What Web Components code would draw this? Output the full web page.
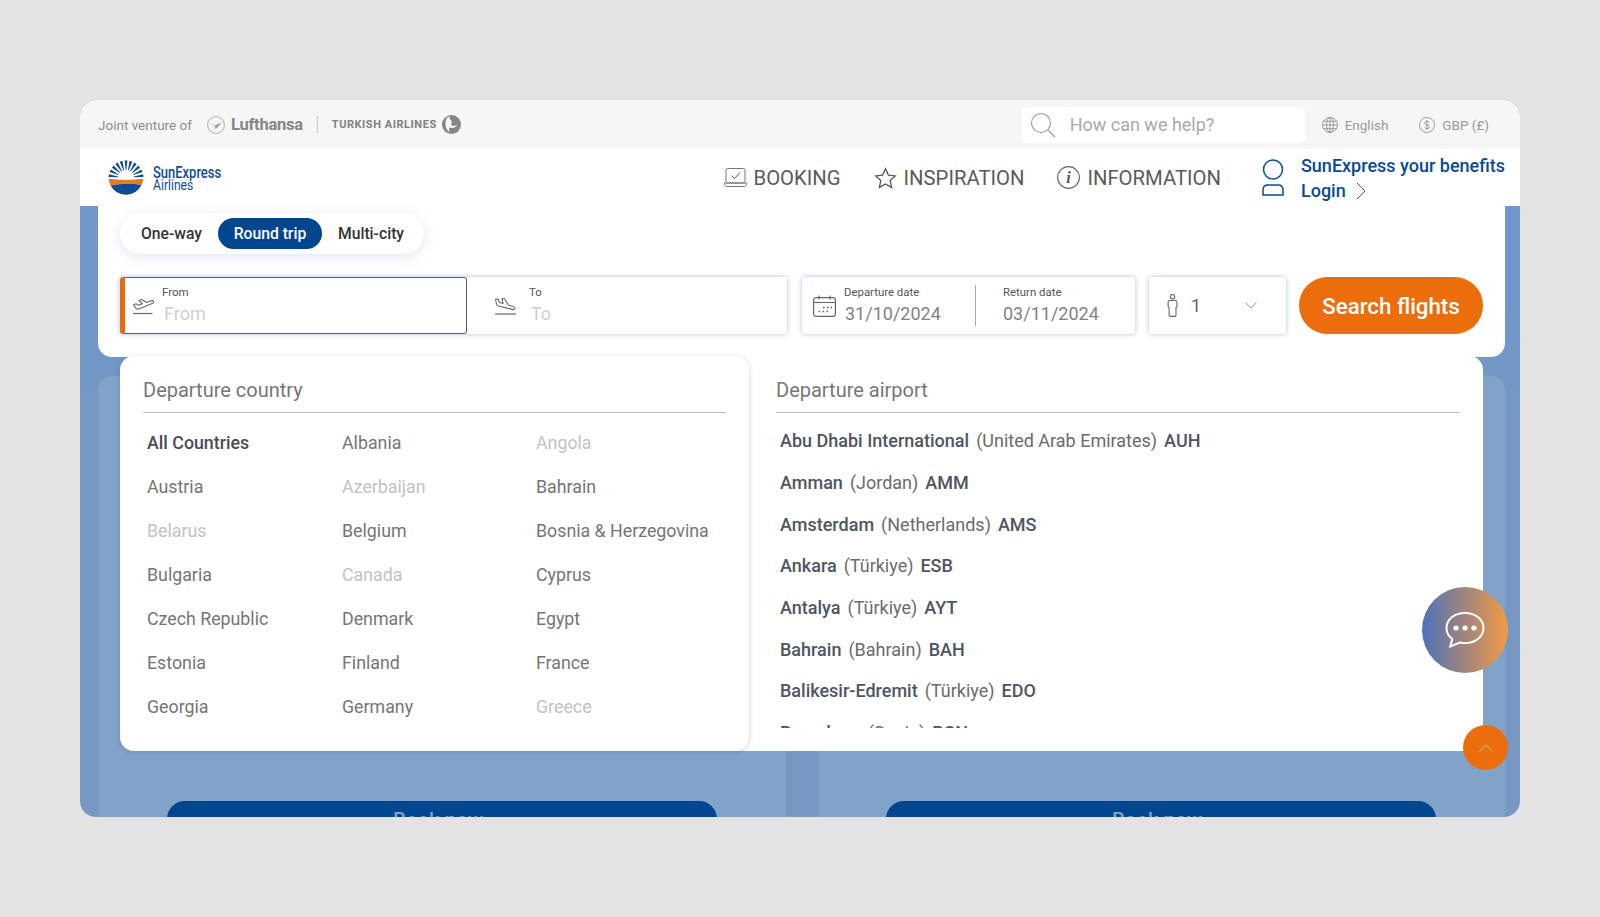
<!DOCTYPE html>
<html lang="en">
<head>
<meta charset="utf-8">
<title>SunExpress</title>
<style>
  html, body { margin: 0; height: 100%; }
  body { background: #e3e3e3; font-family: Roboto, "Liberation Sans", sans-serif; overflow: hidden; }
</style>
</head>
<body>
<se-app>
  <se-topbar slot="top"></se-topbar>
  <se-header slot="top"></se-header>
  <se-search-panel></se-search-panel>
  <se-promo-row></se-promo-row>
  <se-dropdown></se-dropdown>
</se-app>

<script>
const svgIcons = {
    takeoff: `<svg width="22" height="18" viewBox="0 0 22 18" fill="none" stroke="#666" stroke-width="1.100" stroke-linejoin="round"><path d="M1.500 8L4 6.800l2.500 1.400 4-1.400L7 3.500l2.500-.9L15 5.400 18.500 4c2-.8 3.300-.2 3.200.8-.1.800-.9 1.500-2.200 2L6.500 12c-1 .4-1.900.1-2.500-.7z"/><path d="M1 16.500h19.500" stroke-width="1.200"/></svg>`,
    landing: `<svg width="23" height="18" viewBox="0 0 23 18" fill="none" stroke="#666" stroke-width="1.100" stroke-linejoin="round"><path d="M1.500 2.500L4 2l1.500 3.500L9 6.500 8 1.500l2.500.3L14.500 8l4 1.200c1.700.6 2.800 1.500 2.500 2.500-.3 1-1.700 1.100-3 .7L4.500 9C3.300 8.600 2.700 8 2.500 7z"/><path d="M1 17h21" stroke-width="1.200"/></svg>`,
    calendar: `<svg width="23" height="22" viewBox="0 0 23 22" fill="none" stroke="#666" stroke-width="1.200"><rect x=".6" y="2.600" width="21.800" height="18.800" rx="2.500"/><path d="M.6 7.500h21.800M6 .5v4M17 .5v4"/><path d="M10 12.500h1.600M14 12.500h1.600M17.500 12.500h1.600M5.500 16.500h1.600M9.500 16.500h1.600M13.500 16.500h1.600" stroke-width="1.600"/></svg>`,
    person: `<svg width="11" height="23" viewBox="0 0 11 23" fill="none" stroke="#666" stroke-width="1.100"><circle cx="5.500" cy="2.700" r="2.200"/><path d="M2.800 6.500h5.400c1 0 1.800.8 1.800 1.800v4.200l-1 1v7.500c0 .8-.6 1.400-1.400 1.400H3.500c-.8 0-1.400-.6-1.400-1.400v-7.500l-1-1V8.300c0-1 .8-1.800 1.700-1.800z"/></svg>`,
    chevronDown: `<svg width="12" height="7" viewBox="0 0 12 7" fill="none" stroke="#999" stroke-width="1"><path d="M.5.500l5.500 5.500L11.500.500"/></svg>`,
};

class SeApp extends HTMLElement {
    constructor() {
        super();
        this.attachShadow({ mode: 'open' }).innerHTML = `
      <style>
        :host { display: block; padding: 100px 80px; box-sizing: border-box; height: 917px; }
        .frame { position: relative; height: 717px; border-radius: 16px; overflow: hidden; background: linear-gradient(#6f97c9 30%, #7698c2 45%); display: flex; flex-direction: column; }
        .stage { position: relative; flex: 1; display: flex; flex-direction: column; min-height: 0; }
        .fab { position: absolute; border-radius: 50%; display: flex; align-items: center; justify-content: center; }
        .chat { left: 1342px; top: 487px; width: 86px; height: 86px; background: linear-gradient(90deg, #4e72b8, #f39a42); }
        .up { left: 1383px; top: 625px; width: 45px; height: 45px; background: #ec6d0b; }
      </style>
      <div class="frame">
        <slot name="top"></slot>
        <div class="stage"><slot></slot></div>
        <div class="fab chat">
          <svg width="40" height="38" viewBox="0 0 40 38" fill="none" stroke="#fff" stroke-width="2"><path d="M20 2C9.500 2 1.500 8.500 1.500 17c0 4.500 2.200 8.300 5.800 11l-2 7.500 9.500-4c1.700.4 3.400.6 5.200.6 10.500 0 18.500-6.600 18.500-15.100S30.500 2 20 2z"/><g fill="#fff" stroke="none"><circle cx="11" cy="17" r="2.600"/><circle cx="20" cy="17" r="2.600"/><circle cx="29" cy="17" r="2.600"/></g></svg>
        </div>
        <div class="fab up">
          <svg width="14" height="8" viewBox="0 0 14 8" fill="none" stroke="#f7c49b" stroke-width="1"><path d="M.5 7.500L7 1l6.500 6.500"/></svg>
        </div>
      </div>
    `;
    }
}

class SeTopbar extends HTMLElement {
    constructor() {
        super();
        this.attachShadow({ mode: 'open' }).innerHTML = `
      <style>
        :host { display: flex; align-items: center; height: 49px; background: #f6f6f6; padding: 0 31px 0 18px; color: #8d8d8d; font-size: 13.500px; }
        .lh { display: flex; margin-left: 15px; }
        .lh-name { margin-left: 6px; font-size: 16.500px; font-weight: 700; color: #868686; letter-spacing: -.25px; }
        .sep { width: 1px; height: 17px; background: #c9c9c9; margin: 0 14px; }
        .thy { font-size: 11px; font-weight: 700; letter-spacing: .55px; color: #808080; }
        .thy-mark { display: flex; margin-left: 5px; }
        .search { margin-left: auto; width: 283px; height: 36px; background: #fff; border-radius: 6px; display: flex; align-items: center; box-sizing: border-box; padding-left: 8px; }
        .search span { margin-left: 14px; font-size: 18px; color: #a9a9a9; }
        .opt { display: flex; align-items: center; gap: 7px; color: #999; }
        .lang { margin-left: 17px; }
        .cur { margin-left: 31px; }
      </style>
      <span>Joint venture of</span>
      <span class="lh">
        <svg width="18" height="18" viewBox="0 0 18 18" fill="none" stroke="#9a9a9a" stroke-width=".8"><circle cx="9" cy="9" r="8.400"/><path d="M3 7.500c2 .2 3.500 1.200 5 2.500 .8-1.200 3-2.500 7-3-2 1.500-3.500 3-5 4.700L8.500 13 7.800 10.600C6.500 9.200 5 8.200 3 7.500z" fill="#9a9a9a" stroke="none"/></svg>
      </span>
      <span class="lh-name">Lufthansa</span>
      <span class="sep"></span>
      <span class="thy">TURKISH AIRLINES</span>
      <span class="thy-mark">
        <svg width="19" height="19" viewBox="0 0 19 19"><circle cx="9.500" cy="9.500" r="9.500" fill="#858585"/><path d="M5 2.500C3.500 5 3 9 4 12.500c.8 2 2 3.500 3.500 4.500-.7-2-.5-3.500.3-4.500 2.500 1 5.500.2 7.700-2.500-2 .8-4.500 1-6.500.2 1.200-2 .8-5.500-1.500-6.200L8 1.500z" fill="#f6f6f6"/></svg>
      </span>
      <div class="search">
        <svg width="26" height="26" viewBox="0 0 26 26" fill="none" stroke="#9a9a9a" stroke-width="1.100"><circle cx="11" cy="11" r="9.500"/><path d="M18 18l7 7"/></svg>
        <span>How can we help?</span>
      </div>
      <div class="opt lang">
        <svg width="16" height="16" viewBox="0 0 16 16" fill="none" stroke="#888" stroke-width=".8"><circle cx="8" cy="8" r="7.500"/><ellipse cx="8" cy="8" rx="3.500" ry="7.500"/><path d="M8 .5v15M.5 8h15M1.500 4.300h13M1.500 11.700h13"/></svg>
        English
      </div>
      <div class="opt cur">
        <svg width="16" height="16" viewBox="0 0 16 16" fill="none" stroke="#888" stroke-width=".8"><circle cx="8" cy="8" r="7.500"/><path d="M10.300 5.700C9.900 4.800 9 4.300 8 4.300c-1.300 0-2.300.7-2.300 1.800 0 2.400 4.700 1.300 4.700 3.800 0 1.100-1 1.800-2.400 1.800-1.100 0-2-.5-2.400-1.400M8 3v10"/></svg>
        GBP (£)
      </div>
    `;
    }
}

class SeHeader extends HTMLElement {
    constructor() {
        super();
        let rays = '';
        for (let i = 0; i < 11; i++) {
            const a = (-172 + i * 16.4) * Math.PI / 180;
            const w = 0.08;
            const p = (r, d) => `${(18 + r * Math.cos(a + d)).toFixed(2)},${(18 + r * Math.sin(a + d)).toFixed(2)}`;
            rays += `<polygon points="${p(8, -0.04)} ${p(8, 0.04)} ${p(17.500, w)} ${p(17.500, -w)}"/>`;
        }
        this.attachShadow({ mode: 'open' }).innerHTML = `
      <style>
        :host { display: flex; align-items: center; height: 57px; background: #fff; padding: 0 15px 0 28px; box-sizing: border-box; }
        .logo { display: flex; align-items: center; }
        .brand { margin: 2px 0 0 9px; color: #0f4b92; font-size: 16px; line-height: 13px; font-weight: 500; width: 68px; }
        .brand div { height: 13px; transform: scaleX(.81); transform-origin: left; white-space: nowrap; }
        .brand .sub { font-weight: 400; font-size: 15px; }
        nav { margin-left: auto; display: flex; align-items: center; gap: 33px; }
        .item { display: flex; align-items: center; gap: 7px; font-size: 20.300px; color: #5a5a5a; }
        .user { display: flex; align-items: center; margin-left: 41px; color: #0a4a94; }
        .user-text { margin: 1px 0 0 17px; font-size: 18px; font-weight: 500; line-height: 24px; }
        .login { display: flex; align-items: center; gap: 10px; margin-top: 1px; }
      </style>
      <div class="logo">
        <svg width="36" height="36" viewBox="0 0 36 36">
          <g fill="#0f4b92">${rays}</g>
          <path d="M.8 18.800Q18 21 35.200 18.800Q35 22 33.500 25Q18 22.500 2.500 25.500Q1 22 .8 18.800z" fill="#ea7a1f"/>
          <path d="M2.500 25.500Q18 22.500 33.500 25A17.500 17.500 0 0 1 2.500 25.500z" fill="#0f4b92"/>
        </svg>
        <div class="brand"><div>SunExpress</div><div class="sub">Airlines</div></div>
      </div>
      <nav>
        <div class="item">
          <svg width="23" height="19" viewBox="0 0 23 19" fill="none" stroke="#777" stroke-width="1"><rect x="2" y=".5" width="19" height="14.500" rx="1.500"/><path d="M.5 15h22v1.500c0 1-.8 2-2 2h-18c-1.200 0-2-1-2-2z"/><path d="M7.500 7.500l3 3 5.500-6" stroke="#555"/></svg>
          BOOKING
        </div>
        <div class="item">
          <svg width="23" height="22" viewBox="0 0 23 22" fill="none" stroke="#555" stroke-width="1.300"><path d="M11.500 1.800l2.900 6.300 6.900.8-5.100 4.700 1.400 6.800-6.100-3.400-6.100 3.400 1.400-6.800L1.700 8.900l6.900-.8z"/></svg>
          INSPIRATION
        </div>
        <div class="item">
          <svg width="23" height="23" viewBox="0 0 23 23" fill="none" stroke="#666" stroke-width="1.100"><circle cx="11.500" cy="11.500" r="10.900"/><text x="11.500" y="17" text-anchor="middle" font-family="Liberation Serif, serif" font-style="italic" font-weight="700" font-size="16" fill="#555" stroke="none">i</text></svg>
          INFORMATION
        </div>
      </nav>
      <div class="user">
        <svg width="22" height="37" viewBox="0 0 22 37" fill="none" stroke="#0a4a94" stroke-width="1.500"><circle cx="11" cy="10.500" r="9.500"/><path d="M6 26h10c3 0 5 2 5 5v5H1v-5c0-3 2-5 5-5z"/></svg>
        <div class="user-text">
          <div>SunExpress your benefits</div>
          <div class="login">Login <svg width="10" height="18" viewBox="0 0 10 18" fill="none" stroke="#555" stroke-width="1"><path d="M1 1l8 8-8 8"/></svg></div>
        </div>
      </div>
    `;
    }
}

class SeTripTabs extends HTMLElement {
    constructor() {
        super();
        this.attachShadow({ mode: 'open' }).innerHTML = `
      <style>
        :host { display: inline-flex; align-items: center; height: 41px; width: 304px; box-sizing: border-box; background: #fff; border-radius: 21px; box-shadow: 0 3px 14px rgba(110,140,180,.22); padding-left: 21px; font-size: 15.700px; font-weight: 500; color: #333; }
        .on { background: #02468f; color: #fff; height: 31px; line-height: 31px; width: 104px; text-align: center; border-radius: 16px; margin: 0 16px 0 16px; }
      </style>
      <span>One-way</span><span class="on">Round trip</span><span>Multi-city</span>
    `;
    }
}

class SeRouteField extends HTMLElement {
    constructor() {
        super();
        this.attachShadow({ mode: 'open' });
    }
    connectedCallback() {
        const label = this.getAttribute('label');
        this.shadowRoot.innerHTML = `
      <style>
        :host { display: flex; align-items: center; box-sizing: border-box; height: 57px; background: #fff; }
        :host([active]) { border: 1px solid #59636f; border-left: 5px solid #e96c0c; border-radius: 3px; width: 347px; padding-left: 7px; }
        :host([plain]) { flex: 1; padding-left: 27px; border-radius: 0 3px 3px 0; }
        .gap { margin-left: 8px; }
        :host([plain]) .gap { margin-left: 12px; }
        .label { font-size: 11.500px; line-height: 14px; color: #555; }
        .value { font-size: 18px; line-height: 24px; margin: 3px 0 0 2px; color: #cfcfcf; }
      </style>
      ${svgIcons[this.getAttribute('icon')]}
      <div class="gap"><div class="label">${label}</div><div class="value">${label}</div></div>
    `;
    }
}

class SeDateField extends HTMLElement {
    constructor() {
        super();
        this.attachShadow({ mode: 'open' }).innerHTML = `
      <style>
        :host { display: flex; align-items: center; box-sizing: border-box; width: 333px; height: 57px; background: #fff; border-radius: 3px; box-shadow: 0 0 5px rgba(90,130,185,.5); padding-left: 11px; }
        .col { margin-left: 8px; width: 131px; }
        .col.ret { margin-left: 0; padding-left: 27px; border-left: 1px solid #a8a8a8; width: auto; height: 41px; }
        .label { font-size: 11.400px; line-height: 14px; color: #555; }
        .value { font-size: 18px; line-height: 24px; margin: 3px 0 0 1px; color: #828282; }
        .ret .value { margin-left: 0; }
      </style>
      ${svgIcons.calendar}
      <div class="col"><div class="label">Departure date</div><div class="value">31/10/2024</div></div>
      <div class="col ret"><div class="label">Return date</div><div class="value">03/11/2024</div></div>
    `;
    }
}

class SePaxField extends HTMLElement {
    constructor() {
        super();
        this.attachShadow({ mode: 'open' }).innerHTML = `
      <style>
        :host { display: flex; align-items: center; box-sizing: border-box; width: 137px; height: 57px; background: #fff; border-radius: 3px; box-shadow: 0 0 5px rgba(90,130,185,.5); padding-left: 18px; font-size: 18px; color: #666; }
        span { margin-left: 13px; flex: 1; }
        svg:last-child { margin-right: 29px; }
      </style>
      ${svgIcons.person}<span>1</span>${svgIcons.chevronDown}
    `;
    }
}

class SeSearchPanel extends HTMLElement {
    constructor() {
        super();
        this.attachShadow({ mode: 'open' }).innerHTML = `
      <style>
        :host { display: block; flex: none; box-sizing: border-box; height: 151px; margin: 0 15px 0 18px; padding: 7px 22px 0; background: #fff; border-radius: 0 0 14px 14px; }
        .row { display: flex; align-items: center; margin-top: 23px; }
        .route { display: flex; width: 667px; height: 57px; border-radius: 3px; box-shadow: 0 0 5px rgba(90,130,185,.5); }
        se-date-field { margin-left: 15px; }
        se-pax-field { margin-left: 14px; }
        button { margin-left: 13px; width: 184px; height: 57px; border: 0; border-radius: 29px; background: #ec6d0b; color: #fff; font: 500 22.300px Roboto, sans-serif; }
      </style>
      <se-trip-tabs></se-trip-tabs>
      <div class="row">
        <div class="route">
          <se-route-field active label="From" icon="takeoff"></se-route-field>
          <se-route-field plain label="To" icon="landing"></se-route-field>
        </div>
        <se-date-field></se-date-field>
        <se-pax-field></se-pax-field>
        <button>Search flights</button>
      </div>
    `;
    }
}

class SePromoRow extends HTMLElement {
    constructor() {
        super();
        this.attachShadow({ mode: 'open' }).innerHTML = `
      <style>
        :host { display: grid; flex: none; grid-template-columns: 688px 687px; column-gap: 32px; margin: 19px 15px 0 18px; }
        .card { background: #82a3c9; border-radius: 14px 14px 0 0; height: 470px; padding-top: 425px; box-sizing: border-box; }
        .book { width: 550px; height: 44px; margin-left: 69px; box-sizing: border-box; padding: 9px 8px 0 0; border-radius: 18px; background: #02468f; color: #7fa2c8; text-align: center; font-size: 20.500px; line-height: 20px; font-weight: 500; }
        .card + .card .book { margin-left: 68px; }
      </style>
      <div class="card"><div class="book">Book now</div></div>
      <div class="card"><div class="book">Book now</div></div>
    `;
    }
}

class SeDropdown extends HTMLElement {
    constructor() {
        super();
        const countries = [
            ['All Countries', 'on'], ['Albania'], ['Angola', 'off'],
            ['Austria'], ['Azerbaijan', 'off'], ['Bahrain'],
            ['Belarus', 'off'], ['Belgium'], ['Bosnia & Herzegovina'],
            ['Bulgaria'], ['Canada', 'off'], ['Cyprus'],
            ['Czech Republic'], ['Denmark'], ['Egypt'],
            ['Estonia'], ['Finland'], ['France'],
            ['Georgia'], ['Germany'], ['Greece', 'off'],
        ];
        const airports = [
            ['Abu Dhabi International', 'United Arab Emirates', 'AUH'],
            ['Amman', 'Jordan', 'AMM'],
            ['Amsterdam', 'Netherlands', 'AMS'],
            ['Ankara', 'Türkiye', 'ESB'],
            ['Antalya', 'Türkiye', 'AYT'],
            ['Bahrain', 'Bahrain', 'BAH'],
            ['Balikesir-Edremit', 'Türkiye', 'EDO'],
            ['Barcelona', 'Spain', 'BCN'],
        ];
        this.attachShadow({ mode: 'open' }).innerHTML = `
      <style>
        :host { position: absolute; left: 40px; top: 150px; width: 1363px; height: 395px; display: flex; }
        .left, .right { box-sizing: border-box; background: #fff; }
        .left { position: relative; width: 629px; padding: 22px 23px 0; border-radius: 14px; box-shadow: 0 1px 5px rgba(70,100,140,.3); }
        .right { flex: 1; margin-left: -14px; padding: 22px 23px 0 41px; border-radius: 0 14px 0 0; }
        h2 { margin: 0; font-size: 20px; font-weight: 400; line-height: 24px; padding-bottom: 10px; color: #767676; border-bottom: 1px solid #bdbdbd; }
        .countries { display: grid; grid-template-columns: 195px 194px 1fr; grid-auto-rows: 44px; margin-top: 7px; padding-left: 4px; align-items: center; font-size: 17.800px; color: #757575; }
        .on { font-weight: 500; color: #474c55; }
        .off { color: #c2c2c2; }
        .airports { height: 308px; overflow: hidden; margin-top: 7px; padding-left: 4px; font-size: 18px; color: #4f5560; }
        .airport { height: 41.700px; display: flex; align-items: center; gap: 7px; }
        .airport b { font-weight: 500; }
        .airport span { color: #6b6b6b; }
      </style>
      <div class="left">
        <h2>Departure country</h2>
        <div class="countries">${countries.map(c => `<div class="${c[1] || ''}">${c[0].replace('&', '&amp;')}</div>`).join('')}</div>
      </div>
      <div class="right">
        <h2>Departure airport</h2>
        <div class="airports">${airports.map(a => `<div class="airport"><b>${a[0]}</b><span>(${a[1]})</span><b>${a[2]}</b></div>`).join('')}</div>
      </div>
    `;
    }
}

customElements.define('se-app', SeApp);
customElements.define('se-topbar', SeTopbar);
customElements.define('se-header', SeHeader);
customElements.define('se-trip-tabs', SeTripTabs);
customElements.define('se-route-field', SeRouteField);
customElements.define('se-date-field', SeDateField);
customElements.define('se-pax-field', SePaxField);
customElements.define('se-search-panel', SeSearchPanel);
customElements.define('se-promo-row', SePromoRow);
customElements.define('se-dropdown', SeDropdown);
</script>
</body>
</html>
